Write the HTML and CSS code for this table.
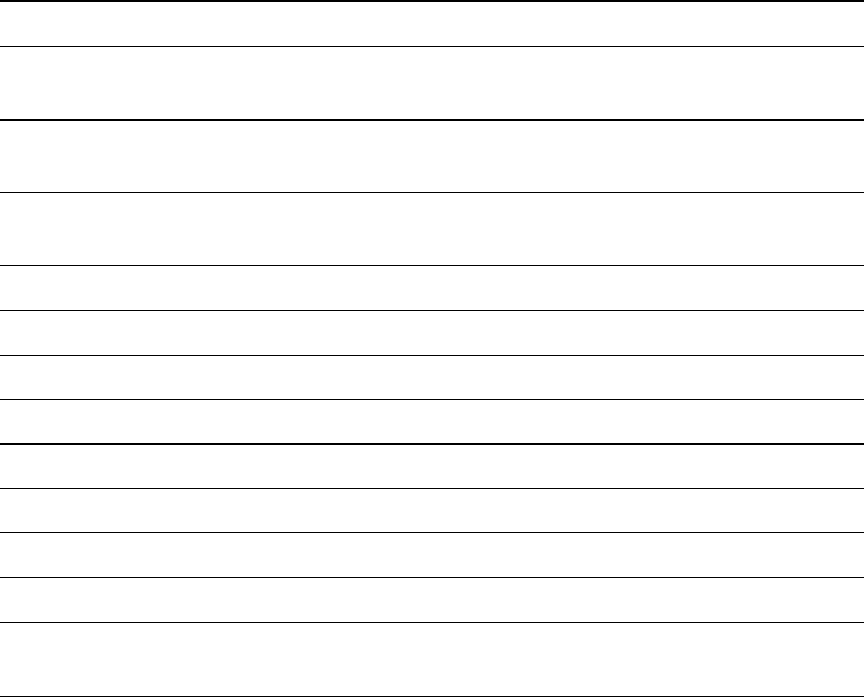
FILE: index.html
```html
<!DOCTYPE html>
<html>
<head>
<meta charset="utf-8">
<link rel="stylesheet" href="styles.css">
</head>
<body>
<div class="table">
  <div class="row h44"></div>
  <div class="row h72 thick"></div>
  <div class="row h71"></div>
  <div class="row h72"></div>
  <div class="row h44"></div>
  <div class="row h44"></div>
  <div class="row h43"></div>
  <div class="row h43 thick"></div>
  <div class="row h43"></div>
  <div class="row h43"></div>
  <div class="row h44"></div>
  <div class="row h44"></div>
  <div class="row h73"></div>
</div>
</body>
</html>
```
FILE: styles.css
```css
html, body {
  margin: 0;
  padding: 0;
  background: #fff;
  font-family: "Liberation Sans", Arial, sans-serif;
}
.table {
  width: 864px;
  display: flex;
  flex-direction: column;
  border-top: 2px solid #000;
}
.row {
  border-bottom: 1px solid #000;
}
.row.thick {
  border-bottom-width: 2px;
}
.h43 { height: 43px; }
.h44 { height: 44px; }
.h71 { height: 71px; }
.h72 { height: 72px; }
.h73 { height: 73px; }
```
